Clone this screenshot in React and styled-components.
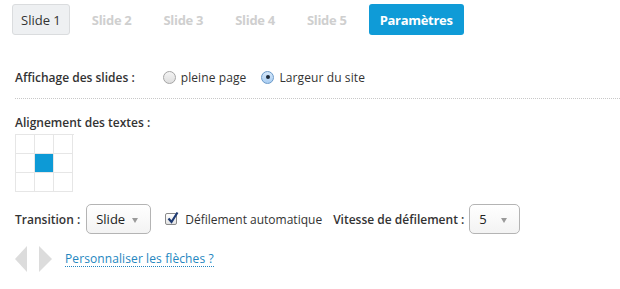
import React, { useState } from "react";
import styled, { createGlobalStyle } from "styled-components";

const GlobalStyle = createGlobalStyle`
    body {
        margin: 0;
        background: #ffffff;
        font-family: "Open Sans", "Liberation Sans", sans-serif;
        font-size: 12px;
        color: #333333;
    }
`;

const Page = styled.div`
    width: 620px;
    height: 289px;
    overflow: hidden;
`;

const Tabs = styled.div`
    display: flex;
    align-items: center;
    gap: 12px;
    padding: 4px 0 0 12px;
`;

const Tab = styled.div`
    height: 31px;
    box-sizing: border-box;
    padding: 0 ${(p) => (p.$active ? 8 : 9)}px;
    display: flex;
    align-items: center;
    border-radius: 3px;
    font-size: 13px;
    font-weight: ${(p) => (p.$active ? "normal" : "bold")};
    color: ${(p) => (p.$primary ? "#ffffff" : p.$active ? "#333333" : "#cfcfcf")};
    background: ${(p) => (p.$primary ? "#0f9bd7" : p.$active ? "#eef0f2" : "transparent")};
    border: 1px solid ${(p) => (p.$active ? "#dadcde" : "transparent")};
    letter-spacing: ${(p) => (p.$active ? "0" : "-0.3px")};
    ${(p) => p.$primary && "padding: 0 10px;"}
`;

const Section = styled.div`
    padding: 0 0 0 15px;
`;

const Row = styled.div`
    display: flex;
    align-items: center;
    height: ${(p) => p.$h || 30}px;
    margin-top: ${(p) => p.$mt || 0}px;
`;

const Label = styled.span`
    font-weight: 600;
    color: #333333;
    margin-right: ${(p) => p.$mr || 0}px;
`;

const RadioItem = styled.label`
    display: flex;
    align-items: center;
    margin-right: 15px;
    letter-spacing: 0.1px;
`;

const RadioDot = styled.span`
    width: 13px;
    height: 13px;
    box-sizing: border-box;
    border-radius: 50%;
    border: 1px solid #a5a5a5;
    background: linear-gradient(#f4f4f4, #dedede);
    margin-right: 5px;
    display: flex;
    align-items: center;
    justify-content: center;
    ${(p) =>
        p.$on &&
        `border-color: #6b9ac9;
         background: linear-gradient(#d6e8fa, #a9cdf2);`}
    &::after {
        content: "";
        width: 4px;
        height: 4px;
        border-radius: 50%;
        background: ${(p) => (p.$on ? "#1d2a3a" : "transparent")};
    }
`;

const Divider = styled.div`
    margin: 6px 0 0 15px;
    border-top: 1px dotted #c8c8c8;
`;

const Grid = styled.div`
    display: grid;
    grid-template-columns: repeat(3, 19px);
    grid-template-rows: repeat(3, 19px);
    width: 58px;
    border-top: 1px solid #e6e6e6;
    border-left: 1px solid #e6e6e6;
    margin-top: 2px;
`;

const Cell = styled.div`
    border-right: 1px solid #e6e6e6;
    border-bottom: 1px solid #e6e6e6;
    background: ${(p) => (p.$on ? "#0d9ad6" : "#ffffff")};
`;

const Select = styled.div`
    height: 30px;
    width: ${(p) => p.$w}px;
    box-sizing: border-box;
    border: 1px solid #b4b4b4;
    border-radius: 5px;
    background: linear-gradient(#ffffff, #f3f3f3);
    display: flex;
    align-items: center;
    justify-content: space-between;
    padding: 0 12px 0 9px;
    margin-right: ${(p) => p.$mr || 0}px;
    font-size: 13px;
    color: #222222;
`;

const Caret = styled.span`
    width: 0;
    height: 0;
    border-left: 3.5px solid transparent;
    border-right: 3.5px solid transparent;
    border-top: 5px solid #9a9a9a;
    margin-top: 2px;
`;

const Check = styled.span`
    width: 12px;
    height: 12px;
    box-sizing: border-box;
    border: 1px solid #8a8a8a;
    border-radius: 2px;
    background: linear-gradient(#ffffff, #e3e3e3);
    margin-right: 8px;
    position: relative;
    svg {
        position: absolute;
        left: 0px;
        top: -3px;
    }
`;

const AutoText = styled.span`
    margin-right: 11px;
`;

const ArrowBox = styled.div`
    display: flex;
    align-items: center;
    gap: 12px;
    margin-right: 13px;
`;

const Link = styled.a`
    color: #2386c0;
    text-decoration: none;
    border-bottom: 1px dotted #2386c0;
    line-height: 15px;
    letter-spacing: 0.1px;
`;

function App() {
    const [align] = useState(4);
    return (
        <Page>
            <GlobalStyle />
            <Tabs>
                <Tab $active>Slide 1</Tab>
                <Tab>Slide 2</Tab>
                <Tab>Slide 3</Tab>
                <Tab>Slide 4</Tab>
                <Tab>Slide 5</Tab>
                <Tab $primary>Paramètres</Tab>
            </Tabs>
            <Section>
                <Row $h={30} $mt={27}>
                    <Label $mr={28}>Affichage des slides :</Label>
                    <RadioItem>
                        <RadioDot />
                        pleine page
                    </RadioItem>
                    <RadioItem>
                        <RadioDot $on />
                        Largeur du site
                    </RadioItem>
                </Row>
            </Section>
            <Divider />
            <Section>
                <Row $h={20} $mt={13}>
                    <Label>Alignement des textes :</Label>
                </Row>
                <Grid>
                    {Array.from({ length: 9 }).map((_, i) => (
                        <Cell key={i} $on={i === align} />
                    ))}
                </Grid>
                <Row $h={30} $mt={12}>
                    <Label $mr={6}>Transition :</Label>
                    <Select $w={65} $mr={14}>
                        Slide <Caret />
                    </Select>
                    <Check>
                        <svg width="14" height="14" viewBox="0 0 14 14">
                            <path
                                d="M2.5 7.5 L5.5 11 L11.5 1.5"
                                fill="none"
                                stroke="#1f3b73"
                                strokeWidth="2.2"
                            />
                        </svg>
                    </Check>
                    <AutoText>Défilement automatique</AutoText>
                    <Label $mr={5}>Vitesse de défilement :</Label>
                    <Select $w={51}>
                        5 <Caret />
                    </Select>
                </Row>
                <Row $h={30} $mt={10}>
                    <ArrowBox>
                        <svg width="12" height="26" viewBox="0 0 12 26">
                            <polygon points="12,0 12,26 0,13" fill="#dcdcdc" />
                        </svg>
                        <svg width="13" height="26" viewBox="0 0 13 26">
                            <polygon points="0,0 0,26 13,13" fill="#dcdcdc" />
                        </svg>
                    </ArrowBox>
                    <Link href="#">Personnaliser les flèches ?</Link>
                </Row>
            </Section>
        </Page>
    );
}

export default App;
